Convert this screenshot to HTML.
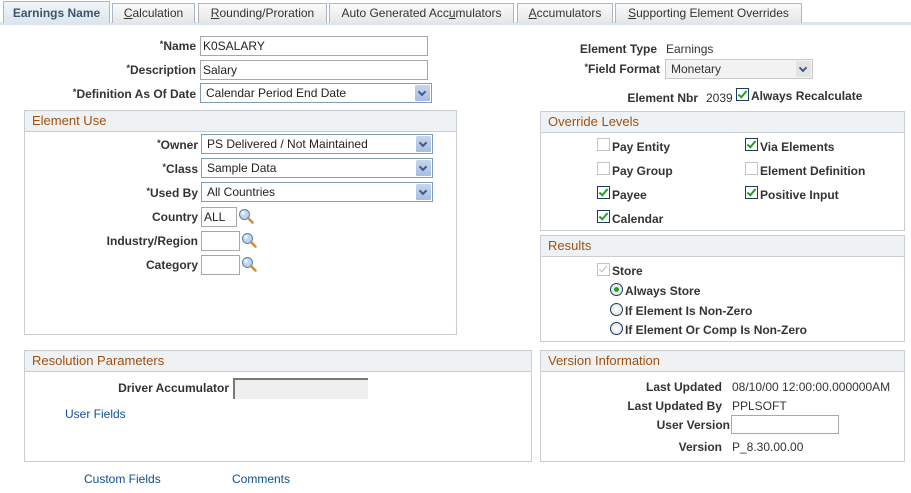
<!DOCTYPE html>
<html><head><meta charset="utf-8"><style>
*{box-sizing:border-box;margin:0;padding:0}
body{width:911px;height:493px;background:#fff;font-family:"Liberation Sans",Arial,sans-serif;font-size:12px;color:#000;position:relative;overflow:hidden}
.a{position:absolute;white-space:nowrap}
.lbl{position:absolute;font-weight:bold;color:#333;text-align:right;white-space:nowrap}
.val{position:absolute;color:#333;white-space:nowrap}
.tab{position:absolute;top:3px;height:20px;border:1px solid #a9b7c6;border-bottom:none;background:linear-gradient(#fafafa,#e6e6e6);color:#333;font-size:12px;text-align:center;line-height:19px}
.tab.act{background:linear-gradient(#f2f5f8,#dde6ef);font-weight:bold;color:#3d5570;top:1px;height:22px;line-height:22px}
.inp{position:absolute;border:1px solid #a8a8a8;background:#fff;height:20px;padding-left:2px;line-height:18px;color:#222}
.sel{position:absolute;border:1px solid #7f9db9;background:#fff;height:20px;padding-left:5px;line-height:18px;color:#222}
.sel .ar{position:absolute;right:1px;top:1px;width:15px;height:16px;background:linear-gradient(#c7d5ec,#a8bde2);border-radius:1px}
.sel .ar:after{content:"";position:absolute;left:4px;top:4px;width:4px;height:4px;border-right:2px solid #3d5a8a;border-bottom:2px solid #3d5a8a;transform:rotate(45deg)}
.box{position:absolute;border:1px solid #c9ced4}
.box .hd{height:21px;background:#eef2f5;border-bottom:1px solid #c9ced4;color:#a24f0d;font-size:13px;line-height:20px;padding-left:7px}
.cb{position:absolute;width:13px;height:13px;border:1px solid #1c3a5e;background:#fff}
.cb.off{border-color:#c4c4c4}
.cb.on:after{content:"";position:absolute;left:3px;top:0px;width:3px;height:7px;border-right:2px solid #21a121;border-bottom:2px solid #21a121;transform:rotate(40deg)}
.cb.dis{border-color:#c4c4c4}
.cb.dis:after{content:"";position:absolute;left:3px;top:0px;width:3px;height:7px;border-right:1px solid #bbb;border-bottom:1px solid #bbb;transform:rotate(40deg)}
.rd{position:absolute;width:13px;height:13px;border-radius:50%;border:1px solid #1c3a5e;background:radial-gradient(#fff,#dcdcdc)}
.rd.on:after{content:"";position:absolute;left:3px;top:3px;width:5px;height:5px;border-radius:50%;background:#21a121}
.cl{position:absolute;font-weight:bold;color:#333;white-space:nowrap}
.lnk{position:absolute;color:#0e4f92;white-space:nowrap}
.mag{position:absolute;width:16px;height:16px}
</style></head><body>

<div class="a" style="left:0;top:22px;width:911px;height:3px;background:#dce6f1"></div>
<div class="tab act" style="left:3px;width:107px">Earnings Name</div>
<div class="tab" style="left:112px;width:83px"><u>C</u>alculation</div>
<div class="tab" style="left:198px;width:129px"><u>R</u>ounding/Proration</div>
<div class="tab" style="left:329px;width:185px">Auto Generated Acc<u>u</u>mulators</div>
<div class="tab" style="left:517px;width:96px"><u>A</u>ccumulators</div>
<div class="tab" style="left:615px;width:187px"><u>S</u>upporting Element Overrides</div>

<div class="lbl" style="right:715px;top:39px"><span style="font-size:9px;vertical-align:top">*</span>Name</div>
<div class="inp" style="left:200px;top:36px;width:228px;height:20px">K0SALARY</div>
<div class="lbl" style="right:715px;top:63px"><span style="font-size:9px;vertical-align:top">*</span>Description</div>
<div class="inp" style="left:200px;top:60px;width:228px;height:20px">Salary</div>
<div class="lbl" style="right:715px;top:87px"><span style="font-size:9px;vertical-align:top">*</span>Definition As Of Date</div>
<div class="sel" style="left:200px;top:83px;width:232px">Calendar Period End Date<div class="ar"></div></div>

<div class="lbl" style="right:254px;top:42px">Element Type</div>
<div class="val" style="left:666px;top:42px">Earnings</div>
<div class="lbl" style="right:251px;top:62px"><span style="font-size:9px;vertical-align:top">*</span>Field Format</div>
<div class="sel" style="left:665px;top:59px;width:148px;border-color:#c8c8c8;background:#f2f2f2;color:#333">Monetary<div class="ar" style="background:#e4e4e4"></div></div>
<div class="lbl" style="right:213px;top:91px">Element Nbr</div>
<div class="val" style="left:706px;top:91px">2039</div>
<div class="cb on" style="left:736px;top:88px"></div>
<div class="cl" style="left:751px;top:89px">Always Recalculate</div>

<div class="box" style="left:24px;top:110px;width:433px;height:225px"><div class="hd">Element Use</div></div>
<div class="lbl" style="right:713px;top:138px"><span style="font-size:9px;vertical-align:top">*</span>Owner</div>
<div class="sel" style="left:201px;top:134px;width:232px">PS Delivered / Not Maintained<div class="ar"></div></div>
<div class="lbl" style="right:713px;top:162px"><span style="font-size:9px;vertical-align:top">*</span>Class</div>
<div class="sel" style="left:201px;top:158px;width:232px">Sample Data<div class="ar"></div></div>
<div class="lbl" style="right:713px;top:186px"><span style="font-size:9px;vertical-align:top">*</span>Used By</div>
<div class="sel" style="left:201px;top:182px;width:232px">All Countries<div class="ar"></div></div>
<div class="lbl" style="right:713px;top:210px">Country</div>
<div class="inp" style="left:201px;top:207px;width:36px">ALL</div>
<div class="lbl" style="right:713px;top:234px">Industry/Region</div>
<div class="inp" style="left:201px;top:231px;width:39px"></div>
<div class="lbl" style="right:713px;top:258px">Category</div>
<div class="inp" style="left:201px;top:255px;width:39px"></div>
<svg class="mag" style="left:238px;top:208px" viewBox="0 0 16 16"><circle cx="6.5" cy="6.5" r="5" fill="#bcd6f2" stroke="#5a7fa8"/><circle cx="5" cy="5" r="2" fill="#fff" opacity=".7"/><path d="M10 10l4.5 4.5" stroke="#d2883a" stroke-width="2.5" stroke-linecap="round"/></svg>
<svg class="mag" style="left:241px;top:232px" viewBox="0 0 16 16"><circle cx="6.5" cy="6.5" r="5" fill="#bcd6f2" stroke="#5a7fa8"/><circle cx="5" cy="5" r="2" fill="#fff" opacity=".7"/><path d="M10 10l4.5 4.5" stroke="#d2883a" stroke-width="2.5" stroke-linecap="round"/></svg>
<svg class="mag" style="left:241px;top:256px" viewBox="0 0 16 16"><circle cx="6.5" cy="6.5" r="5" fill="#bcd6f2" stroke="#5a7fa8"/><circle cx="5" cy="5" r="2" fill="#fff" opacity=".7"/><path d="M10 10l4.5 4.5" stroke="#d2883a" stroke-width="2.5" stroke-linecap="round"/></svg>

<div class="box" style="left:540px;top:111px;width:365px;height:120px"><div class="hd">Override Levels</div></div>
<div class="cb off" style="left:597px;top:138px"></div><div class="cl" style="left:612px;top:140px">Pay Entity</div>
<div class="cb on" style="left:745px;top:138px"></div><div class="cl" style="left:760px;top:140px">Via Elements</div>
<div class="cb off" style="left:597px;top:162px"></div><div class="cl" style="left:612px;top:164px">Pay Group</div>
<div class="cb off" style="left:745px;top:162px"></div><div class="cl" style="left:760px;top:164px">Element Definition</div>
<div class="cb on" style="left:597px;top:186px"></div><div class="cl" style="left:612px;top:188px">Payee</div>
<div class="cb on" style="left:745px;top:186px"></div><div class="cl" style="left:760px;top:188px">Positive Input</div>
<div class="cb on" style="left:597px;top:210px"></div><div class="cl" style="left:612px;top:212px">Calendar</div>

<div class="box" style="left:540px;top:235px;width:365px;height:107px"><div class="hd">Results</div></div>
<div class="cb dis" style="left:597px;top:263px"></div><div class="cl" style="left:612px;top:264px">Store</div>
<div class="rd on" style="left:610px;top:283px"></div><div class="cl" style="left:625px;top:284px">Always Store</div>
<div class="rd" style="left:610px;top:303px"></div><div class="cl" style="left:625px;top:304px">If Element Is Non-Zero</div>
<div class="rd" style="left:610px;top:322px"></div><div class="cl" style="left:625px;top:323px">If Element Or Comp Is Non-Zero</div>

<div class="box" style="left:24px;top:350px;width:508px;height:112px"><div class="hd">Resolution Parameters</div></div>
<div class="lbl" style="right:682px;top:381px">Driver Accumulator</div>
<div class="a" style="left:233px;top:378px;width:135px;height:21px;background:#efefef;border-top:2px solid #7a7a72;border-left:2px solid #7a7a72"></div>
<div class="lnk" style="left:65px;top:407px">User Fields</div>

<div class="box" style="left:540px;top:350px;width:365px;height:112px"><div class="hd">Version Information</div></div>
<div class="lbl" style="right:189px;top:380px">Last Updated</div><div class="val" style="left:732px;top:380px">08/10/00 12:00:00.000000AM</div>
<div class="lbl" style="right:189px;top:399px">Last Updated By</div><div class="val" style="left:732px;top:399px">PPLSOFT</div>
<div class="lbl" style="right:181px;top:418px">User Version</div>
<div class="inp" style="left:731px;top:415px;width:108px;height:19px"></div>
<div class="lbl" style="right:189px;top:440px">Version</div><div class="val" style="left:732px;top:440px">P_8.30.00.00</div>

<div class="lnk" style="left:84px;top:472px">Custom Fields</div>
<div class="lnk" style="left:232px;top:472px">Comments</div>
</body></html>
